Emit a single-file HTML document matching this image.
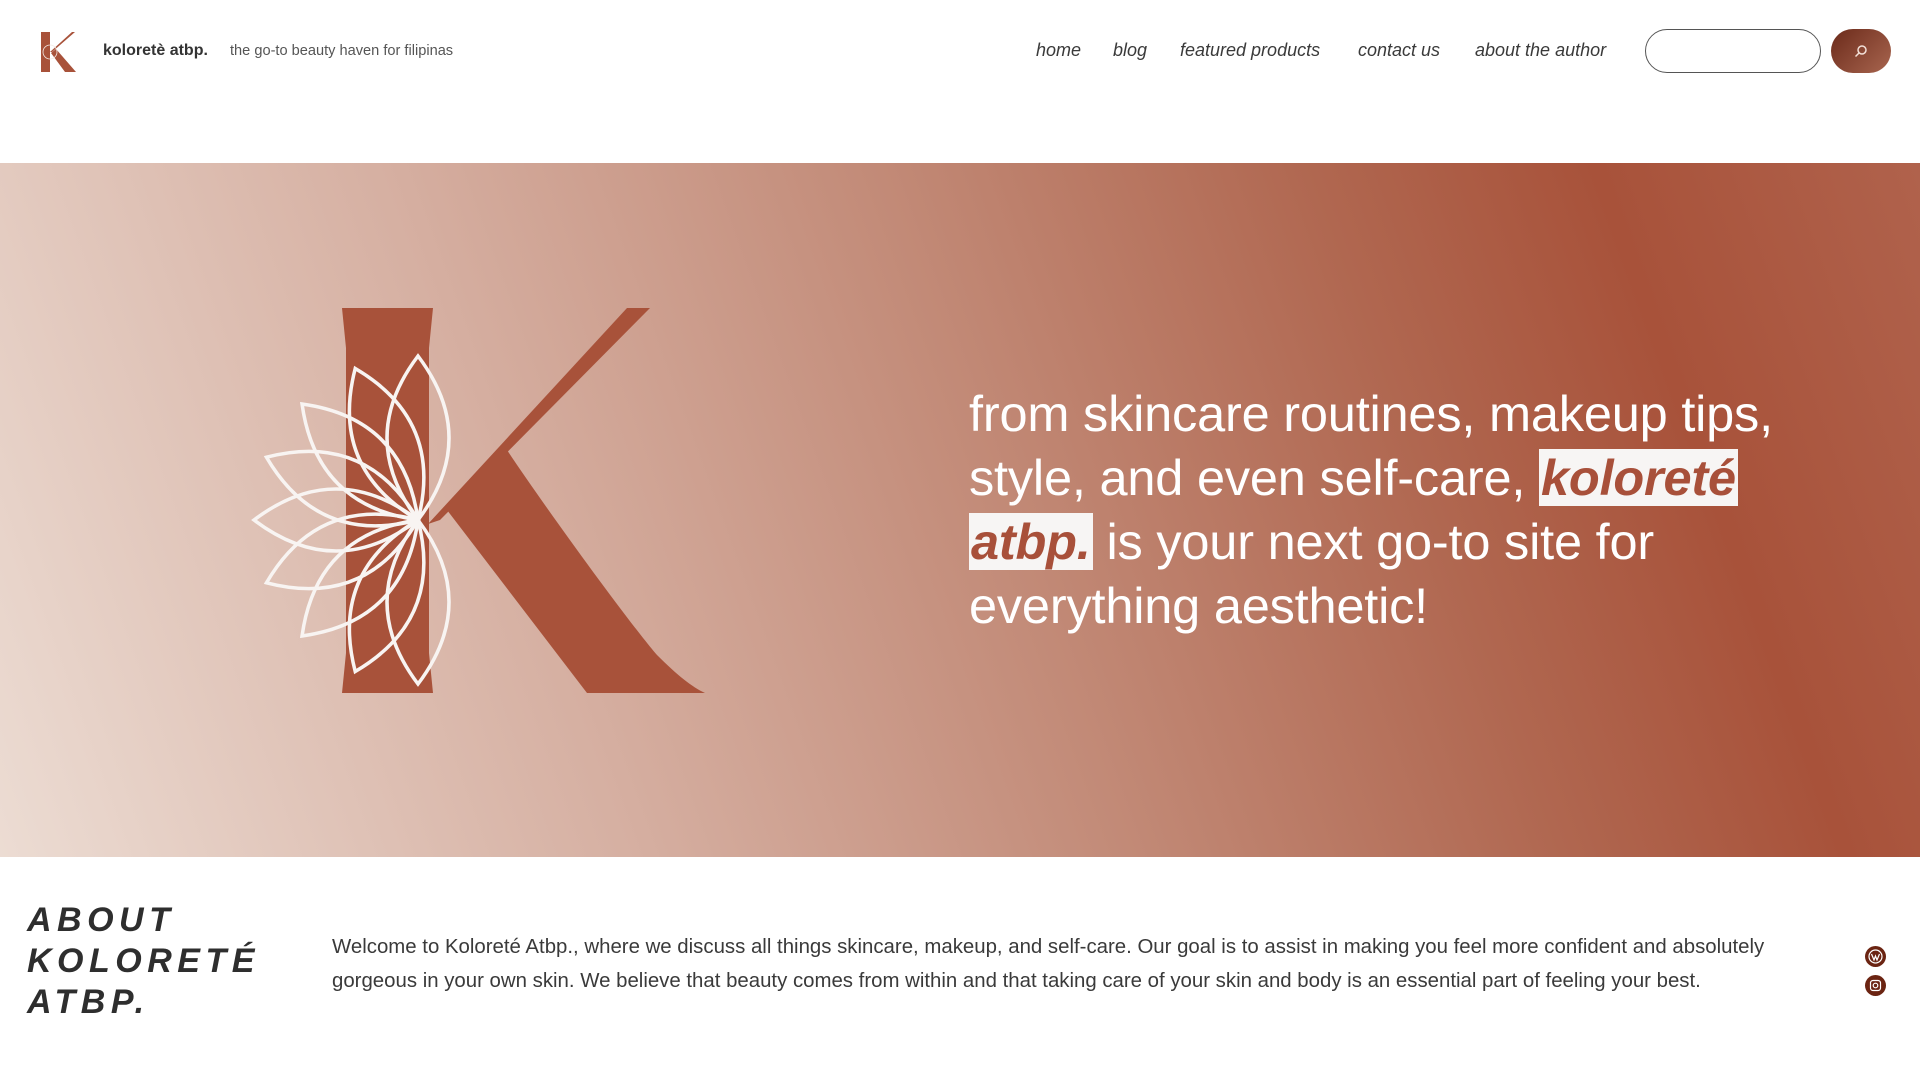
<!DOCTYPE html>
<html><head><meta charset="utf-8"><style>
*{margin:0;padding:0;box-sizing:border-box}
body{width:1920px;height:1080px;overflow:hidden;background:#fff;font-family:"Liberation Sans",sans-serif;color:#333;position:relative}
.abs{position:absolute}
.nav a{position:absolute;top:40px;font-style:italic;font-size:18px;color:#3a3a3a;text-decoration:none;white-space:nowrap}
.hero{position:absolute;left:0;top:163px;width:1920px;height:694px;background:linear-gradient(70deg,#ecdcd3 0%,#d5aea0 30%,#c28a77 52%,#b06750 72%,#a8523a 85%,#b0624c 100%)}
.ht{position:absolute;left:969px;top:382px;font-size:50.5px;line-height:64px;color:#fff;white-space:nowrap;letter-spacing:-0.2px}
.hl{background:#f7f5f4;color:#a8503a;font-style:italic;font-weight:bold;padding:0 2px}
h2{position:absolute;left:27px;top:900px;font-size:34px;line-height:41px;font-style:italic;font-weight:bold;letter-spacing:5.5px;color:#2e2e2e}
.p{position:absolute;left:332px;top:930px;font-size:20.4px;line-height:34px;color:#3a3a3a;white-space:nowrap}
.ic{position:absolute;left:1865px;width:21px;height:21px;border-radius:50%;background:#6b2412}
</style></head><body>
<svg class="abs" style="left:38px;top:30px" width="42" height="44" viewBox="0 0 42 44">
<path d="M3 2h9v40H3z" fill="#a8523a"/><path d="M12 22L34 2h3L14 22z" fill="#a8523a"/><path d="M13 23l5-4 20 23h-11z" fill="#a8523a"/>
<circle cx="12" cy="22" r="7" fill="none" stroke="#f3e9e4" stroke-width="0.8"/></svg>
<div class="abs" style="left:103px;top:42px;font-size:16px;font-weight:bold;color:#333">koloretè atbp.</div>
<div class="abs" style="left:230px;top:43px;font-size:14.6px;color:#555">the go-to beauty haven for filipinas</div>
<div class="nav"><a style="left:1036px">home</a><a style="left:1113px">blog</a><a style="left:1180px">featured products</a><a style="left:1358px">contact us</a><a style="left:1475px">about the author</a></div>
<div class="abs" style="left:1645px;top:29px;width:176px;height:44px;border:1.5px solid #555;border-radius:22px"></div>
<div class="abs" style="left:1831px;top:29px;width:60px;height:44px;border-radius:22px;background:linear-gradient(135deg,#6b2a1a,#a8654f)"></div>
<svg class="abs" style="left:1853px;top:43px" width="16" height="16" viewBox="0 0 16 16"><circle cx="9" cy="7" r="4" fill="none" stroke="#f3e0d8" stroke-width="1.5"/><path d="M6 10l-3.5 3.5" stroke="#f3e0d8" stroke-width="1.5"/></svg>
<div class="hero"></div>
<svg class="abs" style="left:0;top:163px" width="960" height="694" viewBox="0 163 960 694">
<path d="M342 308h91l-4 40v305l4 40h-91l4-40V348z" fill="#a8523a"/>
<path d="M627 308h23L440 520l-12 4z" fill="#a8523a"/>
<path d="M447 510l60-60 c40 60 120 170 150 205 c20 20 35 32 48 38h-118z" fill="#a8523a"/>
<g fill="none" stroke="#f8f4f2" stroke-width="3.5" stroke-linejoin="miter">
<g transform="translate(418 520)">
<path id="pt" d="M0 0Q62 -82 0 -164Q-62 -82 0 0z"/>
<use href="#pt" transform="rotate(-22.5)"/><use href="#pt" transform="rotate(-45)"/><use href="#pt" transform="rotate(-67.5)"/><use href="#pt" transform="rotate(-90)"/><use href="#pt" transform="rotate(-112.5)"/><use href="#pt" transform="rotate(-135)"/><use href="#pt" transform="rotate(-157.5)"/><use href="#pt" transform="rotate(180)"/>
</g></g></svg>
<div class="ht">from skincare routines, makeup tips,<br>style, and even self-care, <span class="hl">koloreté</span><br><span class="hl">atbp.</span> is your next go-to site for<br>everything aesthetic!</div>
<h2>ABOUT<br>KOLORETÉ<br>ATBP.</h2>
<div class="p">Welcome to Koloreté Atbp., where we discuss all things skincare, makeup, and self-care. Our goal is to assist in making you feel more confident and absolutely<br>gorgeous in your own skin. We believe that beauty comes from within and that taking care of your skin and body is an essential part of feeling your best.</div>
<div class="ic" style="top:946px"><svg width="21" height="21" viewBox="0 0 21 21"><circle cx="10.5" cy="10.5" r="6.5" fill="none" stroke="#fff" stroke-width="1.2"/><path d="M6.5 8l2.5 6 1.5-4 1.5 4 2.5-6" fill="none" stroke="#fff" stroke-width="1.2"/></svg></div>
<div class="ic" style="top:975px"><svg width="21" height="21" viewBox="0 0 21 21"><rect x="5.5" y="5.5" width="10" height="10" rx="2.5" fill="none" stroke="#fff" stroke-width="1.2"/><circle cx="10.5" cy="10.5" r="2.3" fill="none" stroke="#fff" stroke-width="1.2"/></svg></div>
</body></html>
